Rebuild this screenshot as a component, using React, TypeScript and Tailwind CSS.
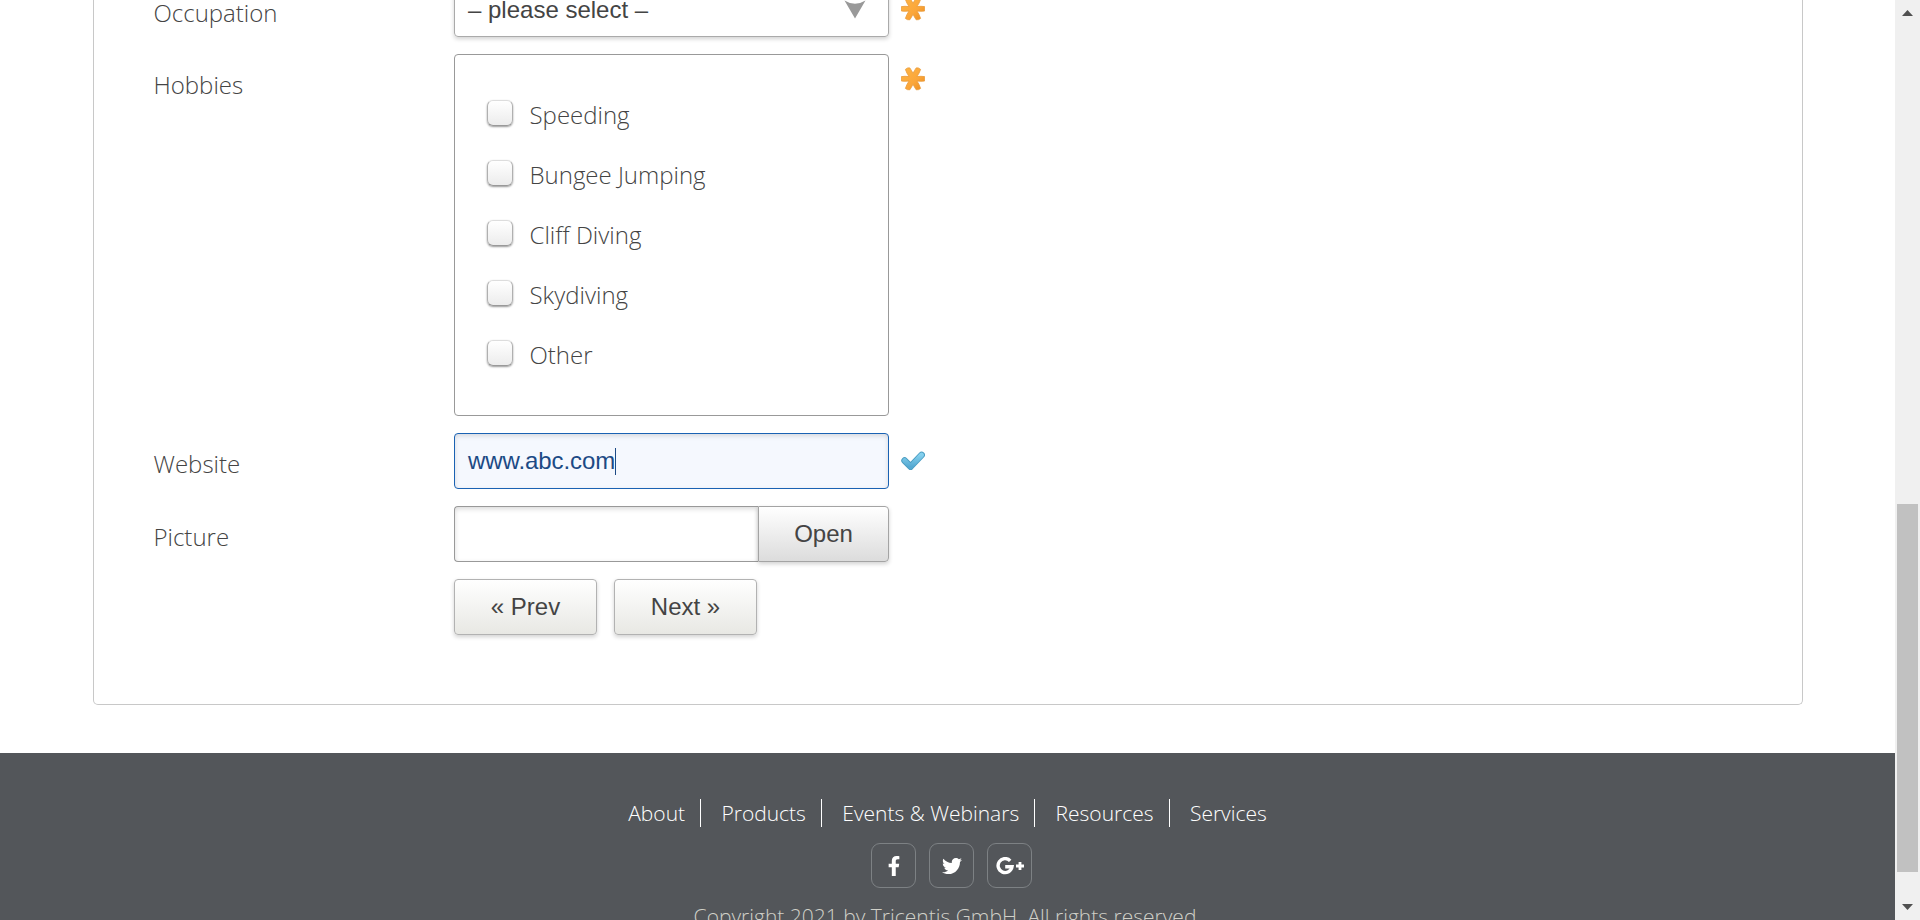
import { FaFacebookF, FaTwitter } from "react-icons/fa";
import type { ReactNode } from "react";

const hobbies = ["Speeding", "Bungee Jumping", "Cliff Diving", "Skydiving", "Other"];
const links = ["About", "Products", "Events & Webinars", "Resources", "Services"];

function Asterisk() {
  return (
    <svg width="24" height="24" viewBox="0 0 24 24">
      <defs>
        <linearGradient id="amber" x1="0" y1="0" x2="1" y2="1">
          <stop offset="0" stopColor="#fdb544" />
          <stop offset="0.6" stopColor="#fba63a" />
          <stop offset="1" stopColor="#e98a1c" />
        </linearGradient>
      </defs>
      <path
        d="M4.4 2.4 Q6.4 .4 8.8 .9 Q10.6 3.4 12 6.4 Q13.4 3.4 15.2 .9 Q17.6 .4 19.6 2.4 Q18.4 6 16 9.6 Q20 9 23.6 9.6 V14 Q20 14.6 16 14 Q18.4 17.6 19.6 21.4 Q17.6 23.2 15.2 22.8 Q13.4 20.2 12 17.2 Q10.6 20.2 8.8 22.8 Q6.4 23.2 4.4 21.4 Q5.6 17.6 8 14 Q4 14.6 .4 14 V9.6 Q4 9 8 9.6 Q5.6 6 4.4 2.4Z"
        fill="url(#amber)"
        stroke="#ea9a3a"
        strokeWidth=".8"
        strokeLinejoin="round"
      />
    </svg>
  );
}

function Check() {
  return (
    <svg width="24" height="20" viewBox="0 0 24 20">
      <defs>
        <linearGradient id="sky" x1="0" y1="0" x2="0" y2="1">
          <stop offset="0" stopColor="#84d0ee" />
          <stop offset="1" stopColor="#55a9d2" />
        </linearGradient>
      </defs>
      <path d="M3.6 9.6 L9.6 15.6 L20.6 4" fill="none" stroke="#4a9dc2" strokeWidth="6.6" strokeLinecap="round" strokeLinejoin="round" />
      <path d="M3.6 9.6 L9.6 15.6 L20.6 4" fill="none" stroke="url(#sky)" strokeWidth="4.8" strokeLinecap="round" strokeLinejoin="round" />
    </svg>
  );
}

function Row({ label, height, labelTop, children }: { label: string; height: string; labelTop: string; children: ReactNode }) {
  return (
    <div className={`flex shrink-0 items-start ${height}`}>
      <div className={`w-[300.5px] shrink-0 text-[24px] leading-[32px] font-light text-[#444] ${labelTop}`}>{label}</div>
      {children}
    </div>
  );
}

function Social({ children }: { children: ReactNode }) {
  return (
    <a className="flex h-[45px] w-[45px] items-center justify-center rounded-[9px] border border-[#7d8184] text-white">
      {children}
    </a>
  );
}

export default function App() {
  return (
    <div className="flex h-[920px] w-[1920px] overflow-hidden bg-white font-['Open_Sans',sans-serif]">
      <div className="flex h-[920px] w-[1895px] flex-col overflow-hidden">
        <main className="ml-[93px] flex h-[705px] w-[1710px] shrink-0 flex-col rounded-b-[5px] border border-t-0 border-[#c8c8c8] pl-[59.5px]">
          <Row label="Occupation" height="h-[54px]" labelTop="mt-[-3px]">
            <div className="mt-[-19px] flex h-14 w-[435px] items-center justify-between rounded-[4px] border border-[#aaa] px-[13px] pr-[22px] font-['Liberation_Sans',sans-serif] text-[24px] text-[#444] shadow-[0_2px_4px_rgba(0,0,0,0.18)]">
              <span className="mt-[2px]">– please select –</span>
              <svg width="22" height="19" viewBox="0 0 22 19" className="mt-px">
                <path d="M.5 .5 Q11 7 21.5 .5 L11 18.5Z" fill="#999" />
              </svg>
            </div>
            <div className="mt-[-3px] ml-3"><Asterisk /></div>
          </Row>
          <Row label="Hobbies" height="h-[379px]" labelTop="mt-[15px]">
            <div className="flex h-[362px] w-[435px] flex-col rounded-[4px] border border-[#999] pt-[30px] pl-8">
              {hobbies.map((h) => (
                <label key={h} className="flex h-[60px] shrink-0 items-center text-[24px] font-light text-[#444]">
                  <span className="mt-[-4px] mr-[16.5px] h-[26px] w-[26px] rounded-[6px] border border-[#b0b0b0] border-t-[#ddd] border-b-[#999] bg-linear-to-b from-white to-[#ececec] shadow-[0_1px_2px_rgba(0,0,0,0.4)]" />
                  {h}
                </label>
              ))}
            </div>
            <div className="mt-[13px] ml-3"><Asterisk /></div>
          </Row>
          <Row label="Website" height="h-[73px]" labelTop="mt-[15px]">
            <div className="flex h-14 w-[435px] items-center rounded-[4px] border border-[#1a62b3] bg-[#f5f8fe] pl-[13px] font-['Liberation_Sans',sans-serif] text-[24px] tracking-[-0.08px] text-[#1c4a85] shadow-[inset_0_2px_5px_rgba(0,0,0,0.13)]">
              www.abc.com
              <span className="h-[27px] w-px bg-[#1c4a85]" />
            </div>
            <div className="mt-[18px] ml-3"><Check /></div>
          </Row>
          <Row label="Picture" height="h-[73px]" labelTop="mt-[15px]">
            <div className="h-14 w-[304px] rounded-l-[4px] border border-r-0 border-[#999] shadow-[inset_0_2px_5px_rgba(0,0,0,0.15)]" />
            <button className="h-14 w-[131px] rounded-r-[4px] border border-[#a4a4a4] bg-linear-to-b from-white to-[#dcdcdc] font-['Liberation_Sans',sans-serif] text-[24px] text-[#444] shadow-[0_2px_4px_rgba(0,0,0,0.18)]">
              Open
            </button>
          </Row>
          <div className="ml-[300.5px] flex gap-[17px] font-['Liberation_Sans',sans-serif] text-[24px] text-[#444]">
            <button className="h-14 w-[143px] rounded-[4px] border border-[#b2b2b2] bg-linear-to-b from-white to-[#e8e8e4] shadow-[0_2px_4px_rgba(0,0,0,0.18)]">« Prev</button>
            <button className="h-14 w-[143px] rounded-[4px] border border-[#b2b2b2] bg-linear-to-b from-white to-[#e8e8e4] shadow-[0_2px_4px_rgba(0,0,0,0.18)]">Next »</button>
          </div>
        </main>
        <footer className="mt-12 flex h-[167px] shrink-0 flex-col items-center overflow-hidden bg-[#53565a] pt-[46px]">
          <nav className="flex h-7 shrink-0 text-[21px] leading-[28px] text-white">
            {links.map((l, i) => (
              <a key={l} className={i < 4 ? "mr-[20.4px] border-r border-white pr-[15px] font-light" : "font-light"}>{l}</a>
            ))}
          </nav>
          <div className="mt-4 ml-[8px] flex shrink-0 gap-[13px]">
            <Social><FaFacebookF size={20} /></Social>
            <Social><FaTwitter size={20} /></Social>
            <Social>
              <svg width="28" height="18" viewBox="0 0 28 18">
                <path d="M14.2 3.8 A7 7 0 1 0 16 9.8 H9.2" fill="none" stroke="white" strokeWidth="3.4" />
                <path d="M24 5 V13 M20 9 H28" stroke="white" strokeWidth="2.8" />
              </svg>
            </Social>
          </div>
          <p className="mt-3 shrink-0 text-[21px] leading-[32px] font-light text-[#d0d0c8]">Copyright 2021 by Tricentis GmbH. All rights reserved.</p>
        </footer>
      </div>
      <aside className="flex h-[920px] w-[25px] flex-col items-center bg-[#f0f0f0]">
        <svg width="11" height="6" viewBox="0 0 11 6" className="mt-[10px] shrink-0"><path d="M0 6 L5.5 0 L11 6Z" fill="#505050" /></svg>
        <div className="mt-[488px] h-[368px] w-[21px] shrink-0 bg-[#c1c1c1]" />
        <svg width="11" height="6" viewBox="0 0 11 6" className="mt-8 shrink-0"><path d="M0 0 L5.5 6 L11 0Z" fill="#505050" /></svg>
      </aside>
    </div>
  );
}
